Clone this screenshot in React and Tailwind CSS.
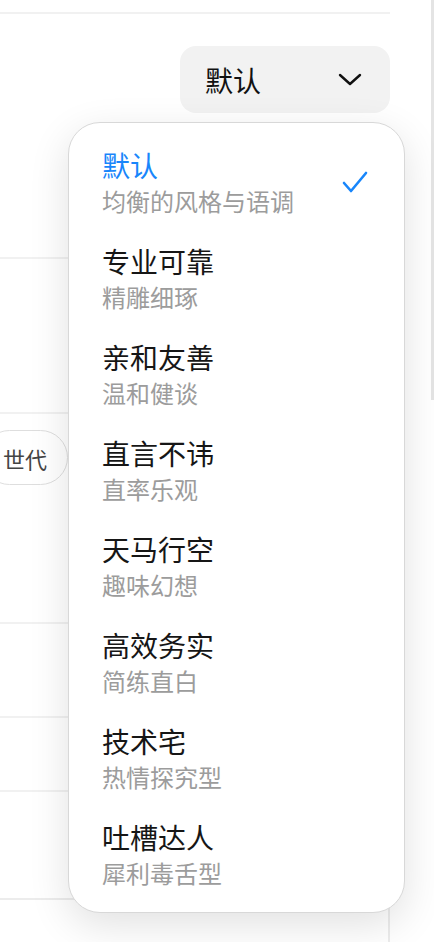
import { useState } from 'react';

const styles = [
  { title: '默认', desc: '均衡的风格与语调' },
  { title: '专业可靠', desc: '精雕细琢' },
  { title: '亲和友善', desc: '温和健谈' },
  { title: '直言不讳', desc: '直率乐观' },
  { title: '天马行空', desc: '趣味幻想' },
  { title: '高效务实', desc: '简练直白' },
  { title: '技术宅', desc: '热情探究型' },
  { title: '吐槽达人', desc: '犀利毒舌型' },
];

function Divider() {
  return <div className="h-[2px] bg-[#f1f1f1]" />;
}

export default function App() {
  const [selected, setSelected] = useState(0);

  return (
    <div
      className="relative w-[434px] h-[942px] overflow-hidden bg-white"
      style={{ fontFamily: '"Noto Sans CJK SC", "Noto Sans", sans-serif' }}
    >
      {/* scrollbar thumb */}
      <div className="absolute right-0 top-0 w-[3px] h-[400px] bg-[#e4e4e4]" />

      <div className="w-[390px] flex flex-col">
        <div className="h-[12px]" />
        <Divider />
        <div className="flex justify-end pt-[32px]">
          <button className="w-[210px] h-[67px] rounded-[16px] bg-[#f2f2f2] flex items-center justify-between pl-[25px] pr-[28px]">
            <span className="text-[28px] leading-none text-[#111]">{styles[selected].title}</span>
            <svg width="24" height="14" viewBox="0 0 24 14" fill="none">
              <path d="M2 2 L12 11 L22 2" stroke="#111" strokeWidth="2.4" strokeLinecap="round" strokeLinejoin="round" />
            </svg>
          </button>
        </div>

        <div className="h-[144px]" />
        <Divider />
        <div className="h-[153px]" />
        <Divider />

        <div className="overflow-hidden pt-[16px]">
          <div className="flex gap-3">
            <div className="-ml-[18px] h-[55px] shrink-0 rounded-full border-[1.5px] border-[#dedede] flex items-center pl-[20px] pr-[20px]">
              <span className="text-[22px] leading-none text-[#444]">世代</span>
            </div>
          </div>
        </div>

        <div className="h-[137px]" />
        <Divider />
        <div className="h-[92px]" />
        <Divider />
        <div className="h-[72px]" />
        <Divider />
        <div className="h-[106px]" />
        <div className="h-[60px] border-t-2 border-r-2 border-[#ececec]" />
      </div>

      {/* dropdown menu */}
      <div className="absolute left-[68px] top-[122px] w-[337px] h-[791px] rounded-[32px] border border-[#d8d8d8] bg-white shadow-[0_12px_40px_rgba(0,0,0,0.12)] pt-[12px]">
        {styles.map((s, i) => (
          <div
            key={s.title}
            onClick={() => setSelected(i)}
            className="h-[96px] py-[12px] pl-[33px] pr-[36px] flex items-center justify-between cursor-pointer"
          >
            <div className="flex flex-col">
              <span className={`text-[28px] leading-[36px] ${i === selected ? 'text-[#1886fb]' : 'text-[#161616]'}`}>
                {s.title}
              </span>
              <span className="text-[24px] leading-[36px] text-[#9c9c9c]">{s.desc}</span>
            </div>
            {i === selected && (
              <svg width="26" height="24" viewBox="0 0 26 24" fill="none">
                <path d="M2 12 L9 20 L24 2" stroke="#1886fb" strokeWidth="2.6" strokeLinecap="round" strokeLinejoin="round" />
              </svg>
            )}
          </div>
        ))}
      </div>
    </div>
  );
}
